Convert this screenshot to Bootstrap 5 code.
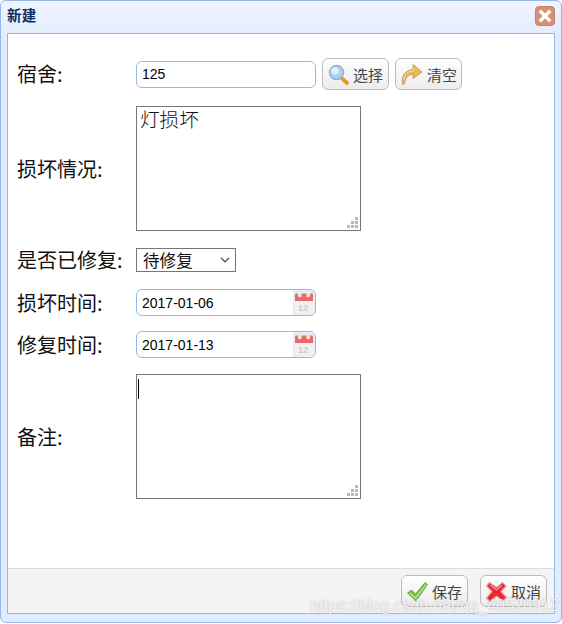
<!DOCTYPE html>
<html lang="zh-CN">
<head>
<meta charset="utf-8">
<title>新建</title>
<link href="https://cdn.jsdelivr.net/npm/bootstrap@5.3.0/dist/css/bootstrap.min.css" rel="stylesheet">
<style>
html,body{height:100%;margin:0;background:#fff;overflow:hidden}
body{font-family:"Noto Sans CJK SC","Liberation Sans",sans-serif;color:#111}
.dlg-win{position:relative;width:562px;height:623px;background:linear-gradient(#eff5ff,#e0ecff 40px);border:1px solid #95b8e7;border-radius:6px;padding:0 6px 8px 6px}
.dlg-head{height:32px;padding-bottom:3px}
.dlg-title{font-size:14.5px;font-weight:700;color:#0e2d5f;line-height:1;letter-spacing:.2px}
.dlg-close{width:20px;height:20px;border-radius:4px;background:#d98f73;border:1px solid #c87f62;padding:0}
.dlg-panel{height:581px;border:1px solid #95b8e7;background:#fff}
.dlg-form{padding:24px 0 0 9px}
.lbl{width:119px;flex:none;font-size:20px;line-height:24px;color:#111}
.r2{margin-top:16px}.r3,.r4{margin-top:17px}.r5{margin-top:15px}.r6{margin-top:16px}
.r1{height:32px}
.txt{width:180px;height:27px;border:1px solid #95b8e7;border-radius:6px;padding:0 5px;font-size:14px;font-family:"Liberation Sans",sans-serif;color:#000;box-shadow:none}
.date-box{width:180px;height:27px;border:1px solid #95b8e7;border-radius:6px;overflow:hidden;background:#fff}
.date-box .form-control{height:25px;border:0;border-radius:0;padding:0 5px;font-size:14px;font-family:"Liberation Sans",sans-serif;color:#000;box-shadow:none;background:transparent}
.date-ico{width:22px;height:25px;flex:none;background:#e6eef9}
.area-wrap{width:225px;height:125px}
.area{width:225px;height:125px;border:1px solid #767676;border-radius:0;padding:0 3px;font-size:19.6px;font-weight:300;line-height:24px;color:#111;resize:none;box-shadow:none;display:block}
.grip{position:absolute;right:3px;bottom:3px}
.caret-mark{position:absolute;left:2px;top:5px;width:1px;height:20px;background:#000}
.sel{width:100px;height:24px;border:1px solid #767676;border-radius:0;padding:0 0 0 6px;font-size:16.6px;line-height:22px;color:#111;background-position:right 3px center;background-size:14px 10px;box-shadow:none}
.tool-btn{width:67px;height:32px;border:1px solid #bbb;border-radius:6px;background:linear-gradient(#fff,#ececec);color:#444;font-size:15px;line-height:1;padding:0 0 0 5px;gap:4px}
.tool-btn:hover{border-color:#bbb;color:#444}
.tool-gap{margin-left:6px}
.dlg-foot{height:45px;background:#f4f4f4;border-top:1px solid #ddd;padding:6px 7px 0 0;gap:12px}
.wm{position:absolute;right:2px;bottom:6px;font-family:"Liberation Sans",sans-serif;font-size:16px;line-height:20px;color:rgba(255,255,255,.8);letter-spacing:.1px;text-shadow:0 0 2px rgba(120,120,120,.55);white-space:nowrap}
</style>
</head>
<body>
<div class="dlg-win d-flex flex-column">
  <div class="dlg-head d-flex align-items-center justify-content-between">
    <span class="dlg-title">新建</span>
    <button type="button" class="dlg-close d-flex align-items-center justify-content-center" aria-label="关闭">
      <svg width="14" height="14" viewBox="0 0 14 14"><path d="M3 3 11 11M11 3 3 11" stroke="#fff" stroke-width="3.400" stroke-linecap="square"/></svg>
    </button>
  </div>
  <div class="dlg-panel d-flex flex-column">
    <form class="dlg-form flex-grow-1">
      <div class="d-flex align-items-center r1">
        <label class="lbl">宿舍:</label>
        <input class="form-control txt" value="125">
        <button type="button" class="btn tool-btn tool-gap d-flex align-items-center flex-none">
          <svg width="21" height="21" viewBox="0 0 21 21"><path d="M13 13.500 19 19" stroke="#e39a35" stroke-width="3.800" stroke-linecap="round"/><circle cx="8.500" cy="8.500" r="7" fill="#a9d1f2" stroke="#9cb0c2" stroke-width="1.500"/><circle cx="7" cy="7" r="3.800" fill="#dff0fc"/></svg>
          <span>选择</span>
        </button>
        <button type="button" class="btn tool-btn tool-gap d-flex align-items-center flex-none">
          <svg width="22" height="22" viewBox="0 0 22 22"><path d="M1.500 21C.5 13 4 7.200 12 6.500V1.500L21 9l-9 6.500V11.200C7 11.500 4 15 3.500 21Z" fill="#f4b344" stroke="#b9a081" stroke-width="1"/><path d="M3 17C3.500 11 7 8 13 8V4.500" fill="none" stroke="#fde2a8" stroke-width="1"/></svg>
          <span>清空</span>
        </button>
      </div>
      <div class="d-flex align-items-center r2">
        <label class="lbl">损坏情况:</label>
        <div class="area-wrap position-relative">
          <textarea class="form-control area">灯损坏</textarea>
          <svg class="grip" width="11" height="11" viewBox="0 0 11 11" fill="#b9b9b9"><rect x="8" y="0" width="3" height="3"/><rect x="4" y="4" width="3" height="3"/><rect x="8" y="4" width="3" height="3"/><rect x="0" y="8" width="3" height="3"/><rect x="4" y="8" width="3" height="3"/><rect x="8" y="8" width="3" height="3"/></svg>
        </div>
      </div>
      <div class="d-flex align-items-center r3">
        <label class="lbl">是否已修复:</label>
        <select class="form-select sel"><option>待修复</option><option>已修复</option></select>
      </div>
      <div class="d-flex align-items-center r4">
        <label class="lbl">损坏时间:</label>
        <div class="date-box d-flex align-items-center">
          <input class="form-control" value="2017-01-06">
          <span class="date-ico d-flex align-items-center justify-content-center">
            <svg width="18" height="23" viewBox="0 0 19 23"><rect x="0" y="2" width="19" height="21" rx="1" fill="#f2f1ee"/><path d="M0 3a1 1 0 0 1 1-1H18a1 1 0 0 1 1 1V10H0Z" fill="#e96a6a"/><rect x="3" y="0" width="4" height="6" rx="1.500" fill="#ece7e2"/><rect x="12" y="0" width="4" height="6" rx="1.500" fill="#ece7e2"/><text x="8.500" y="20" font-size="10" font-family="Liberation Sans,sans-serif" text-anchor="middle" fill="#cfcfcf" font-weight="700">12</text></svg>
          </span>
        </div>
      </div>
      <div class="d-flex align-items-center r5">
        <label class="lbl">修复时间:</label>
        <div class="date-box d-flex align-items-center">
          <input class="form-control" value="2017-01-13">
          <span class="date-ico d-flex align-items-center justify-content-center">
            <svg width="18" height="23" viewBox="0 0 19 23"><rect x="0" y="2" width="19" height="21" rx="1" fill="#f2f1ee"/><path d="M0 3a1 1 0 0 1 1-1H18a1 1 0 0 1 1 1V10H0Z" fill="#e96a6a"/><rect x="3" y="0" width="4" height="6" rx="1.500" fill="#ece7e2"/><rect x="12" y="0" width="4" height="6" rx="1.500" fill="#ece7e2"/><text x="8.500" y="20" font-size="10" font-family="Liberation Sans,sans-serif" text-anchor="middle" fill="#cfcfcf" font-weight="700">12</text></svg>
          </span>
        </div>
      </div>
      <div class="d-flex align-items-center r6">
        <label class="lbl">备注:</label>
        <div class="area-wrap position-relative">
          <textarea class="form-control area"></textarea>
          <span class="caret-mark"></span>
          <svg class="grip" width="11" height="11" viewBox="0 0 11 11" fill="#b9b9b9"><rect x="8" y="0" width="3" height="3"/><rect x="4" y="4" width="3" height="3"/><rect x="8" y="4" width="3" height="3"/><rect x="0" y="8" width="3" height="3"/><rect x="4" y="8" width="3" height="3"/><rect x="8" y="8" width="3" height="3"/></svg>
        </div>
      </div>
    </form>
    <div class="dlg-foot d-flex justify-content-end align-items-start">
      <button type="button" class="btn tool-btn d-flex align-items-center flex-none">
        <svg width="21" height="21" viewBox="0 0 21 21"><path d="M.5 12 4.500 9 8.500 13 18 1.500 20.500 3.500 9 20 .5 12Z" fill="#74c043" stroke="#5ba333" stroke-width=".8" stroke-linejoin="round"/><path d="M3 12 8.500 17 19 3.500" fill="none" stroke="#c4ea9f" stroke-width="1.200"/></svg>
        <span>保存</span>
      </button>
      <button type="button" class="btn tool-btn d-flex align-items-center flex-none">
        <svg width="21" height="21" viewBox="0 0 21 21"><path d="M3.500 1.500 10.500 6.500 16.500 1.500 20 5 15 10.500 20.500 16.500 17 20 10.500 15 4 20.500.5 17 6 10.500.5 5Z" fill="#e9272c" stroke="#d8a9a9" stroke-width="1.200" stroke-linejoin="round"/><path d="M4 4 10.500 9 16 4.500" fill="none" stroke="#f79a9a" stroke-width="1.200"/></svg>
        <span>取消</span>
      </button>
    </div>
  </div>
  <div class="wm">https://blog.csdn.net/qq_40520912</div>
</div>
<script src="https://cdn.jsdelivr.net/npm/bootstrap@5.3.0/dist/js/bootstrap.bundle.min.js"></script>
</body>
</html>
